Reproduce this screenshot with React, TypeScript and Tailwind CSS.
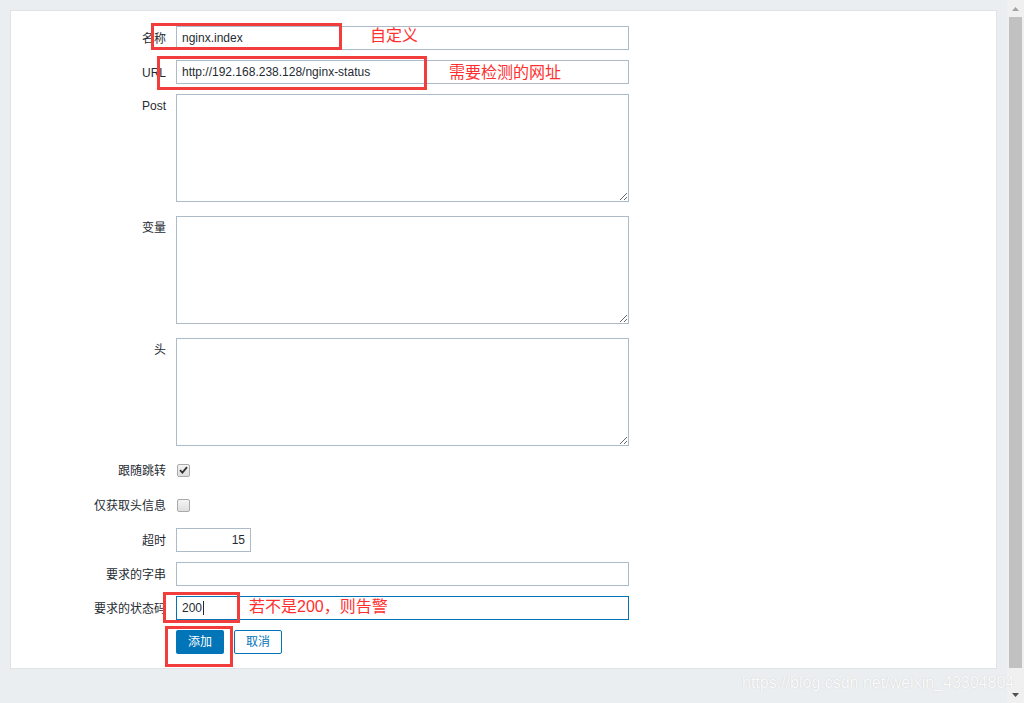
import { ReactNode } from "react";

const FONT = '"Liberation Sans", Arial, "Noto Sans CJK SC", sans-serif';

type RowProps = {
  label: string;
  children: ReactNode;
  top?: boolean;
  className?: string;
};

function Row({ label, children, top, className = "" }: RowProps) {
  return (
    <div className={`flex ${top ? "items-start" : "items-center"} ${className}`}>
      <label
        className={`w-[155px] shrink-0 text-right text-[12px] leading-[14px] text-[#1f2c33] ${top ? "pt-[5px]" : "pt-px"}`}
      >
        {label}
      </label>
      <div className="ml-[10px] flex items-center">{children}</div>
    </div>
  );
}

function TextInput({ value = "", width = "w-[453px]", right }: { value?: string; width?: string; right?: boolean }) {
  return (
    <input
      readOnly
      defaultValue={value}
      className={`h-[24px] ${width} border border-[#acbbc7] bg-white px-[5px] text-[12px] text-[#1f2c33] outline-none ${right ? "text-right" : ""}`}
      style={{ fontFamily: FONT }}
    />
  );
}

function Area() {
  return (
    <textarea
      readOnly
      className="block h-[108px] w-[453px] border border-[#acbbc7] bg-white px-[5px] text-[12px] outline-none"
    />
  );
}

function Checkbox({ checked }: { checked?: boolean }) {
  return (
    <span className="ml-px flex h-[13px] w-[13px] items-center justify-center rounded-[2px] border border-[#a9a9a9] bg-gradient-to-b from-[#f4f4f4] to-[#dedede]">
      {checked && (
        <svg width="9" height="8" viewBox="0 0 9 8">
          <path d="M1 4.2 L3.4 6.6 L8 1.2" fill="none" stroke="#333" strokeWidth="1.8" />
        </svg>
      )}
    </span>
  );
}

function Scrollbar() {
  return (
    <div className="flex h-[703px] w-[17px] shrink-0 flex-col bg-[#f0f0f0]">
      <div className="flex h-[17px] items-center justify-center">
        <svg width="7" height="4" viewBox="0 0 7 4">
          <path d="M0 4 L3.5 0 L7 4 Z" fill="#a3a3a3" />
        </svg>
      </div>
      <div className="flex-1 px-[2px]">
        <div className="h-[651px] w-full bg-[#c1c1c1]" />
      </div>
      <div className="flex h-[17px] items-center justify-center">
        <svg width="7" height="4" viewBox="0 0 7 4">
          <path d="M0 0 L3.5 4 L7 0 Z" fill="#505050" />
        </svg>
      </div>
    </div>
  );
}

export default function App() {
  return (
    <div
      className="relative flex h-[703px] w-[1024px] overflow-hidden bg-[#ebeef0]"
      style={{ fontFamily: FONT }}
    >
      <div className="flex-1 p-[10px]">
        <div className="h-[659px] w-[987px] border border-[#dfe4e7] bg-white pt-[15px]">
          <Row label="名称">
            <TextInput value="nginx.index" />
          </Row>
          <Row label="URL" className="mt-[10px]">
            <TextInput value="http://192.168.238.128/nginx-status" />
          </Row>
          <Row label="Post" top className="mt-[10px]">
            <Area />
          </Row>
          <Row label="变量" top className="mt-[14px]">
            <Area />
          </Row>
          <Row label="头" top className="mt-[14px]">
            <Area />
          </Row>
          <Row label="跟随跳转" className="mt-[12px] h-[24px]">
            <Checkbox checked />
          </Row>
          <Row label="仅获取头信息" className="mt-[11px] h-[24px]">
            <Checkbox />
          </Row>
          <Row label="超时" className="mt-[11px]">
            <TextInput value="15" width="w-[75px]" right />
          </Row>
          <Row label="要求的字串" className="mt-[10px]">
            <TextInput />
          </Row>
          <Row label="要求的状态码" className="mt-[10px]">
            <div className="flex h-[24px] w-[453px] items-center border border-[#0275b8] bg-white px-[5px] text-[12px] text-[#1f2c33]">
              200
              <span className="ml-px h-[14px] w-px bg-[#1f2c33]" />
            </div>
          </Row>
          <div className="mt-[10px] flex pl-[165px]">
            <button className="h-[24px] w-[48px] rounded-[2px] bg-[#0275b8] text-[12px] text-white">
              添加
            </button>
            <button className="ml-[10px] h-[24px] w-[48px] rounded-[2px] border border-[#0275b8] bg-white text-[12px] text-[#0275b8]">
              取消
            </button>
          </div>
        </div>
      </div>
      <Scrollbar />

      {/* red annotation overlays */}
      <div className="absolute left-[151px] top-[23px] h-[27px] w-[191px] border-[3px] border-[#f23d3d]" />
      <div className="absolute left-[157px] top-[56px] h-[34px] w-[270px] border-[3px] border-[#f23d3d]" />
      <div className="absolute left-[163px] top-[592px] h-[31px] w-[77px] border-[3px] border-[#f23d3d]" />
      <div className="absolute left-[165px] top-[626px] h-[41px] w-[68px] border-[3px] border-[#f23d3d]" />
      <div className="absolute left-[370px] top-[26px] text-[16px] leading-[20px] text-[#ff2f2f]">自定义</div>
      <div className="absolute left-[449px] top-[63px] text-[16px] leading-[20px] text-[#ff2f2f]">需要检测的网址</div>
      <div className="absolute left-[249px] top-[597px] text-[16px] leading-[20px] text-[#ff2f2f]">若不是200，则告警</div>

      {/* watermark */}
      <div className="absolute left-[742px] top-[674px] whitespace-nowrap text-[16px] leading-[18px] text-[#fafbfb] [text-shadow:0_0_1px_rgba(0,0,0,0.18)]">
        https://blog.csdn.net/weixin_43304804
      </div>
    </div>
  );
}
